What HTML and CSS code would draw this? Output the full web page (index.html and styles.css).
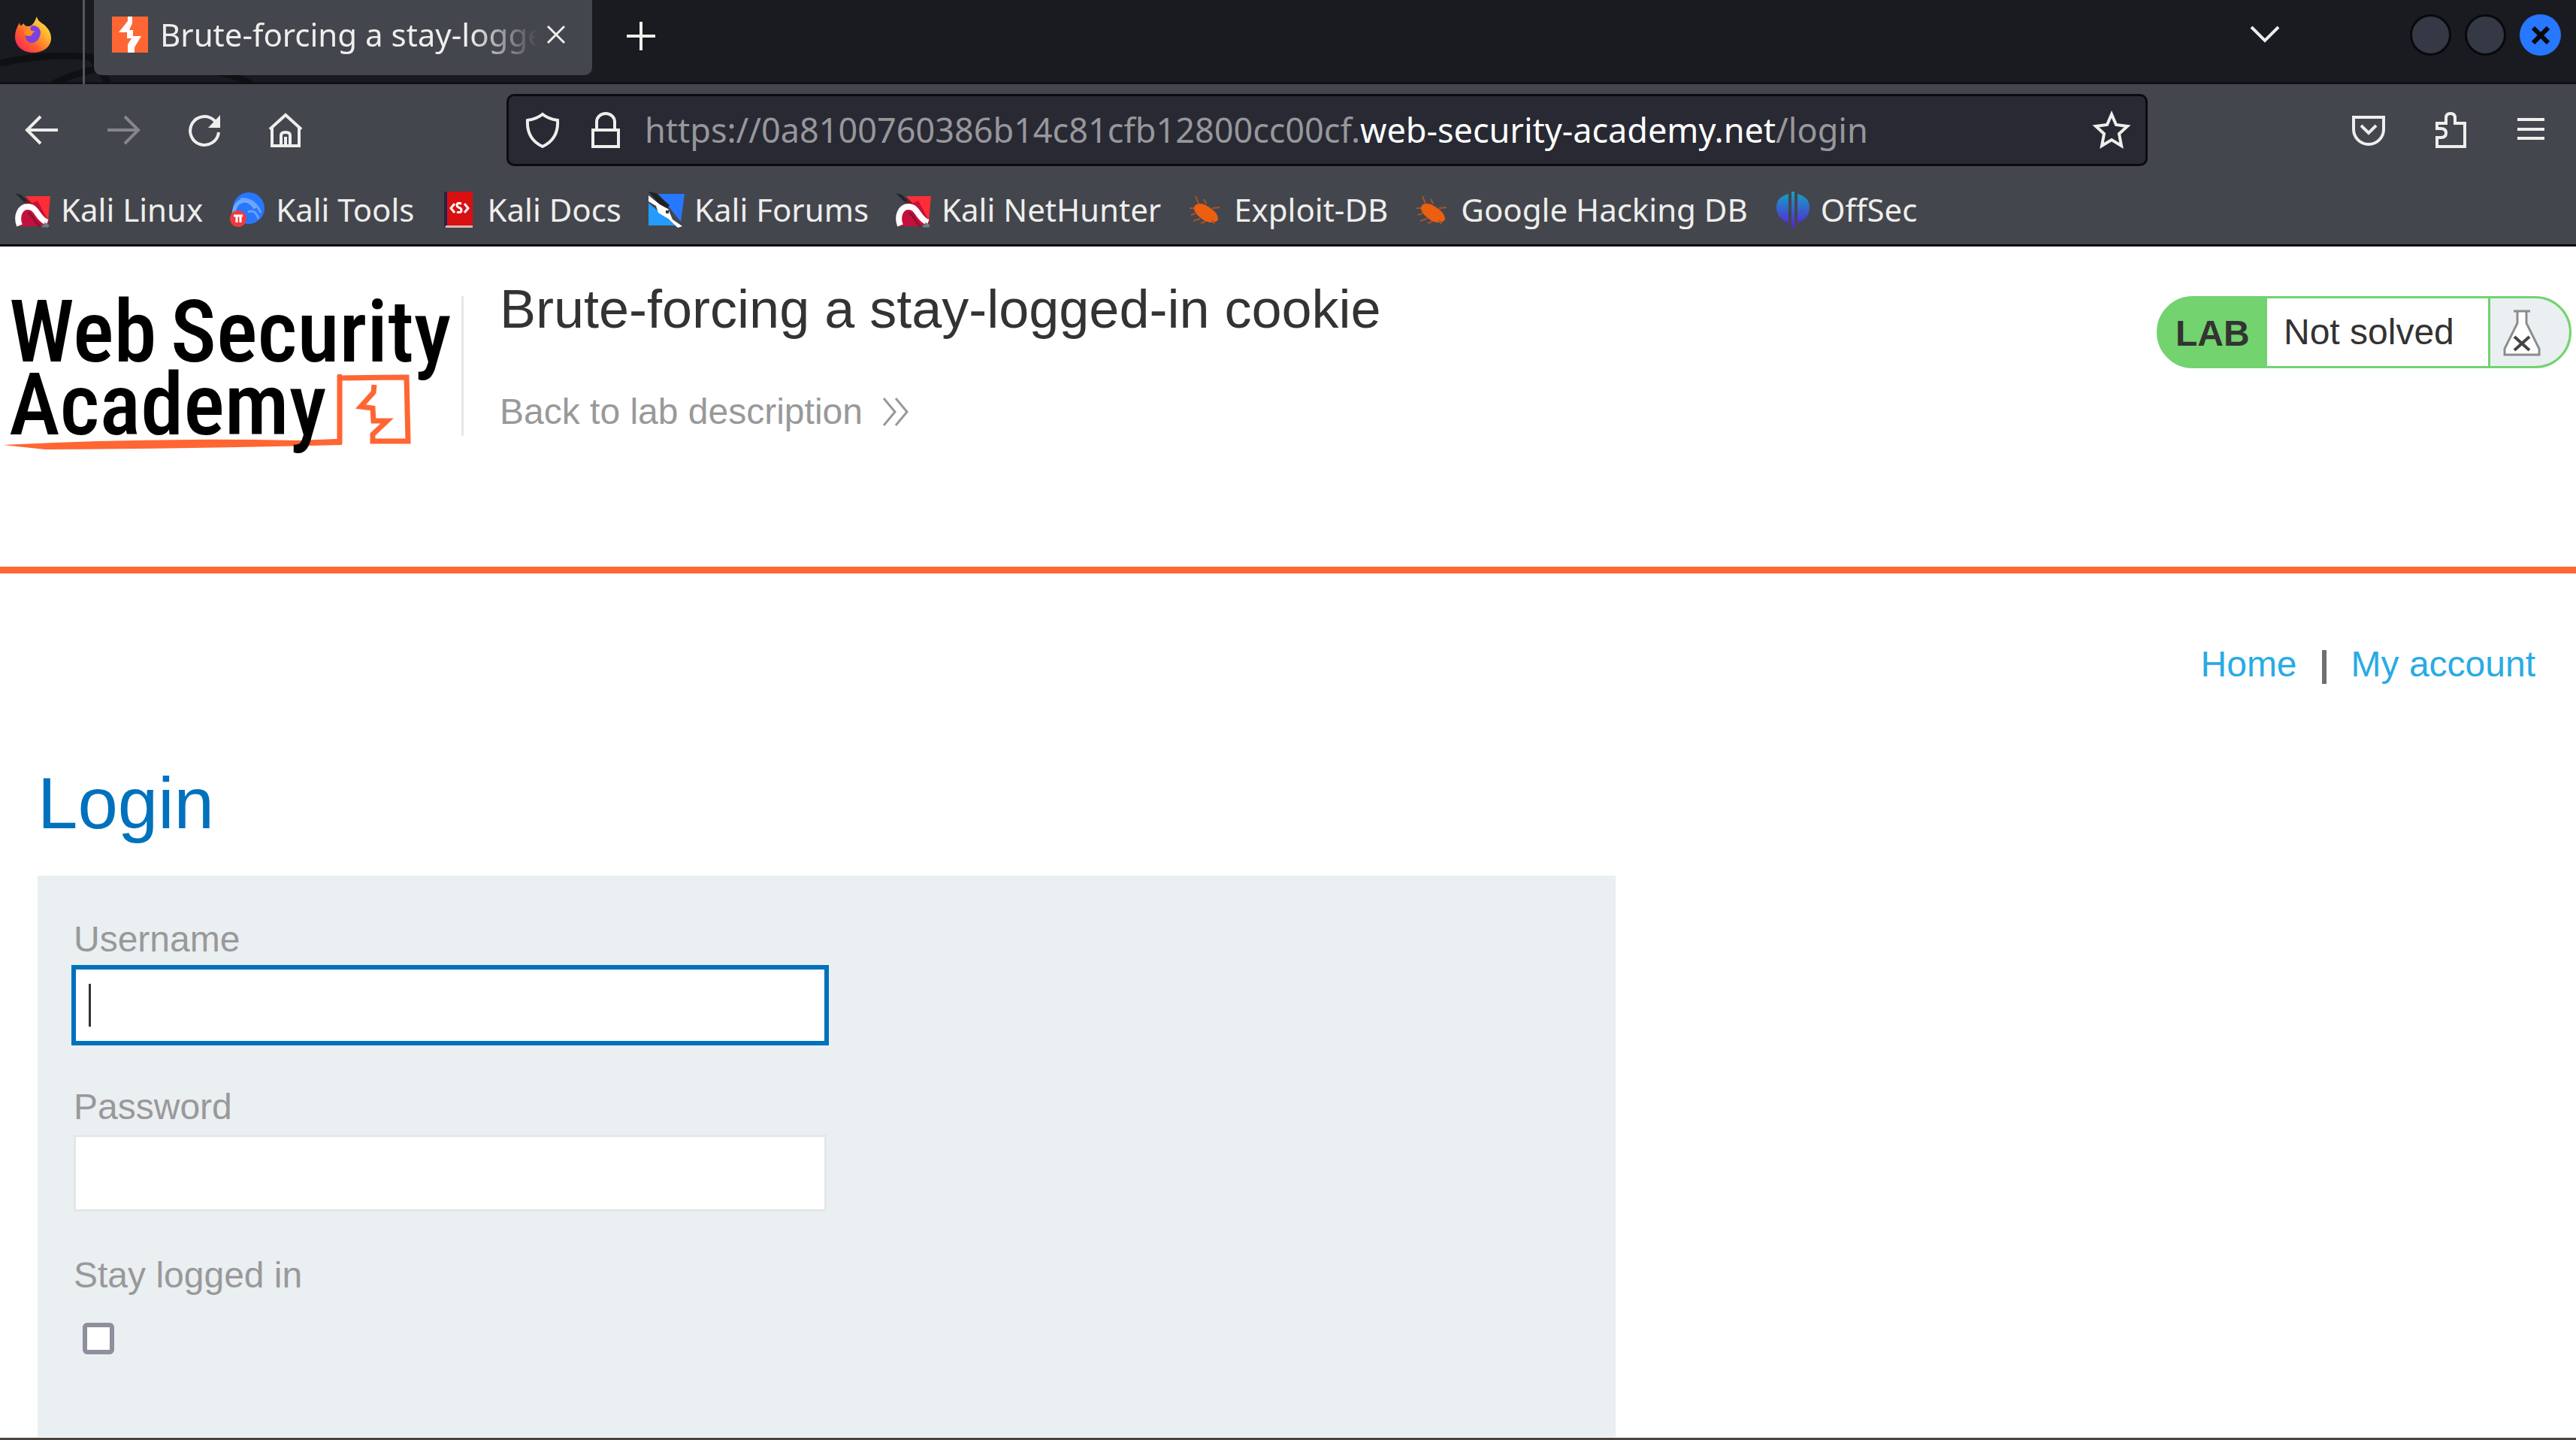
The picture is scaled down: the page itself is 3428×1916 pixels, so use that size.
FILE: index.html
```html
<!DOCTYPE html>
<html lang="en">
<head>
<meta charset="utf-8">
<title>Brute-forcing a stay-logged-in cookie</title>
<link rel="stylesheet" href="styles.css">
</head>
<body>
<svg width="0" height="0" class="defs" aria-hidden="true">
  <defs>
    <symbol id="dragon" viewBox="0 0 48 48">
      <path d="M14 6h33l-3 34z" fill="#fd2d36"/>
      <path d="M8 22 30 12l16 30-16 4H2V34z" fill="#c4103c"/>
      <path d="M0 2l8 2 10 9-3 4z" fill="#26272b"/>
      <path d="M12 13l7-1 7 9-9 1z" fill="#8c1027"/>
      <path d="M6 45C1 32 7 20 17 20c13 0 12 16 26 21" fill="none" stroke="#fff" stroke-width="8"/>
      <path d="M17 28c7 2 8 12 16 18" fill="none" stroke="#8f1131" stroke-width="3"/>
      <path d="M39 42l6 4M36 46l8 0" stroke="#777a80" stroke-width="3"/>
    </symbol>
    <symbol id="bug" viewBox="0 0 48 48">
      <path d="M8 22c0-7 11-8 19-2 8 5 13 10 13 17-3 6-15 5-22-1-5-4-10-9-10-14z" fill="#ec5e10"/>
      <path d="M14 16 10 6m14 10-3-6M8 22H2m30 0 10-1M10 29l-6 2m12 5-9 3m16 1-6 2m15-4 3 5" stroke="#a85425" stroke-width="2" fill="none"/>
    </symbol>
  </defs>
</svg>

<div class="tabstrip">
  <svg class="wallpaper" viewBox="0 0 360 112" aria-hidden="true"><path d="M0 84Q60 70 122 76L145 112M70 112Q140 76 240 92Q300 92 335 112" fill="none" stroke="#0f1013" stroke-width="9"/></svg>
  <svg class="firefox" viewBox="0 0 48 48" aria-hidden="true">
    <defs><linearGradient id="fox" x1="1" y1="0" x2="0" y2="1"><stop offset="0" stop-color="#fff44f"/><stop offset=".35" stop-color="#ffb02e"/><stop offset=".65" stop-color="#ff5a30"/><stop offset="1" stop-color="#f5156c"/></linearGradient></defs>
    <path d="M29 0c1 6 6 8 11 12 5 5 8 10 8 17 0 11-10 19-24 19S0 39 0 27C0 20 2 15 6 8c0 3 1 4 2 4l4-3c0 3 3 4 6 4 5 0 8-6 11-13z" fill="url(#fox)"/>
    <path d="M23 12c9 0 13 7 10 14-2 6-6 9-11 9s-9-5-8-12l9-3c-4-3-3-6 0-8z" fill="#7b3fe4"/>
    <path d="M12 20c6-3 13-1 15 0-5 1-3 6-8 6-4 0-7-2-7-6z" fill="#ff8b16"/>
  </svg>
  <div class="tab">
    <svg class="favicon" viewBox="0 0 48 48" aria-hidden="true"><path fill="#ff6633" d="M0 0h48v48H0z"/><path fill="#fff" d="M21 0h6v9l-4 9h5v8h11l-9 15v7h-9V37l5-8h-6v-8H9l12-15z"/></svg>
    <span class="tab-title">Brute-forcing a stay-logged-in cookie</span>
    <button class="icon-btn tab-close" aria-label="Close tab"><svg viewBox="0 0 24 24"><path d="M1 1l22 22M23 1 1 23"/></svg></button>
  </div>
  <button class="icon-btn new-tab" aria-label="New tab"><svg viewBox="0 0 38 38"><path d="M19 0v38M0 19h38"/></svg></button>
  <button class="icon-btn all-tabs" aria-label="List all tabs"><svg viewBox="0 0 38 24"><path d="M1 2l18 18L37 2"/></svg></button>
  <div class="window-controls">
    <button class="dot" aria-label="Minimize"></button>
    <button class="dot" aria-label="Maximize"></button>
    <button class="dot dot-close" aria-label="Close"><svg viewBox="0 0 24 24"><path d="M2 2l20 20M22 2 2 22"/></svg></button>
  </div>
</div>

<div class="toolbar">
  <div class="nav-buttons">
    <button class="icon-btn" aria-label="Back"><svg viewBox="0 0 48 48"><path d="M45 24H4M22 6 4 24l18 18"/></svg></button>
    <button class="icon-btn dim" aria-label="Forward"><svg viewBox="0 0 48 48"><path d="M3 24h41M26 6l18 18-18 18"/></svg></button>
    <button class="icon-btn" aria-label="Reload"><svg viewBox="0 0 48 48"><path d="M43 27A19 19 0 1 1 37 11l4 4"/><path class="solid" d="M45 4v17H29z"/></svg></button>
    <button class="icon-btn" aria-label="Home"><svg viewBox="0 0 48 48"><path d="M3 23 24 4l21 19M6 21v24h36V21M18 45V31q0-4 6-4t6 4v14M24 33v12"/></svg></button>
  </div>
  <div class="urlbar">
    <svg class="glyph" viewBox="0 0 48 48" aria-hidden="true"><path d="M24 3c6 5 13 7 20 8 1 16-5 28-20 35C9 39 3 27 4 11c7-1 14-3 20-8z"/></svg>
    <svg class="glyph lock" viewBox="0 0 48 48" aria-hidden="true"><path d="M7 24h34v22H7zM12 24V13a12 11 0 0 1 24 0v11"/></svg>
    <div class="url">https://0a8100760386b14c81cfb12800cc00cf.<span class="host">web-security-academy.net</span>/login</div>
    <button class="icon-btn" aria-label="Bookmark this page"><svg viewBox="0 0 48 48"><path d="M24 3l6 14 15 2-11 10 3 16-13-8-13 8 3-16L3 19l15-2z"/></svg></button>
  </div>
  <div class="tool-buttons">
    <button class="icon-btn" aria-label="Save to Pocket"><svg viewBox="0 0 48 48"><path d="M4 7h40v16a20 20 0 0 1-40 0zM14 18l10 10 10-10"/></svg></button>
    <button class="icon-btn" aria-label="Extensions"><svg viewBox="0 0 48 48"><path d="M7 15h12V8q0-6 6-6t6 6v7h13v31H7V34h5q7 0 7-6t-7-6H7z"/></svg></button>
    <button class="icon-btn" aria-label="Menu"><svg viewBox="0 0 48 48"><path d="M6 10h36M6 23h36M6 35h36"/></svg></button>
  </div>
</div>

<nav class="bookmarks" aria-label="Bookmarks">
  <a href="#"><svg viewBox="0 0 48 48"><use href="#dragon"/></svg>Kali Linux</a>
  <a href="#"><svg viewBox="0 0 48 48"><ellipse cx="25" cy="22" rx="21" ry="21" fill="#2777ff"/><path d="M5 30C6 10 24 6 34 22" fill="none" stroke="#71a8ff" stroke-width="5"/><path d="M14 10q18-2 27 18M24 27q10-4 14 9" fill="none" stroke="#6ba3fa" stroke-width="3"/><circle cx="11" cy="36" r="11" fill="#ef3b3e"/><path d="M5 32h12M9 32v9m5-9v9" stroke="#fff" stroke-width="3"/></svg>Kali Tools</a>
  <a href="#"><svg viewBox="0 0 48 48"><path fill="#d90f12" d="M6 0h36v46H6z"/><path fill="#2a2347" d="M4 0h4v46H4z"/><path fill="#d9b4b5" d="M6 45h36v3H6z"/><path d="M18 16l-5 6 5 6m13-12 5 6-5 6M27 16q-6-2-6 2c0 4 7 3 6 7 0 3-4 3-6 2" fill="none" stroke="#fff" stroke-width="3"/></svg>Kali Docs</a>
  <a href="#"><svg viewBox="0 0 48 48"><path fill="#2777ff" d="M13 3h35l-5 37z"/><path fill="#249bff" d="M0 15l36 30H0z"/><path fill="#202126" d="M0 0l10 2 18 16-6 8z"/><path fill="#fff" d="M0 5l15 12 11 6 6 14 13 9-6 2-13-12-13-8-3-9L0 13z"/><path fill="#333" d="M23 25h4v4h-4z"/></svg>Kali Forums</a>
  <a href="#"><svg viewBox="0 0 48 48"><use href="#dragon"/></svg>Kali NetHunter</a>
  <a href="#"><svg viewBox="0 0 48 48"><use href="#bug"/></svg>Exploit-DB</a>
  <a href="#"><svg viewBox="0 0 48 48"><use href="#bug"/></svg>Google Hacking DB</a>
  <a href="#"><svg viewBox="0 0 48 48"><defs><linearGradient id="off" x1="0" y1="0" x2="0" y2="1"><stop offset="0" stop-color="#12a5c4"/><stop offset="1" stop-color="#5a1fd6"/></linearGradient></defs><path fill="url(#off)" d="M18 3v39Q2 35 2 21T18 3zM30 3v39q16-7 16-21T30 3zM22 0h4v48h-4z"/></svg>OffSec</a>
</nav>

<header class="lab-header">
  <svg class="logo" viewBox="0 0 614 216" role="img" aria-label="Web Security Academy">
    <path d="M4 198Q200 188 395 192L449 190V104L455 104V198Q250 203 60 204z" fill="#ff6633"/>
    <path d="M452 196 452 109 541 108 543 193 496 193 496 184 515 166 497 166 496 149 480 147 497 128 498 118" fill="none" stroke="#ff6633" stroke-width="7"/>
    <text x="12" y="87" class="logo-text">Web</text>
    <text x="227" y="87" class="logo-text">Security</text>
    <text x="12" y="184" class="logo-text">Academy</text>
  </svg>
  <div class="divider"></div>
  <div class="lab-title">
    <h2>Brute-forcing a stay-logged-in cookie</h2>
    <a class="back" href="#">Back to lab description<svg viewBox="0 0 36 38" aria-hidden="true"><path d="M2 1l15 18L2 37M18 1l15 18-15 18"/></svg></a>
  </div>
  <div class="status">
    <span class="status-tag">LAB</span>
    <span class="status-text">Not solved</span>
    <span class="status-icon"><svg viewBox="0 0 50 62" aria-hidden="true"><path class="flask" d="M14 2h22M19 2v16L2 52v8h46v-8L31 18V2"/><path class="cross" d="M15 36l20 18M35 36 15 54"/></svg></span>
  </div>
</header>

<main>
  <nav class="links"><a href="#">Home</a><span class="bar"></span><a href="#">My account</a></nav>
  <h1>Login</h1>
  <form class="login">
    <label for="username">Username</label>
    <input class="field active" id="username" type="text">
    <label for="password">Password</label>
    <input class="field" id="password" type="password">
    <label for="stay">Stay logged in</label>
    <input class="check" id="stay" type="checkbox">
  </form>
</main>
<div class="window-edge"></div>
</body>
</html>
```
FILE: styles.css
```css
* { box-sizing: border-box; }
body { margin: 0; background: #fff; font: 48px/56px "Liberation Sans", Arial, sans-serif; color: #333332; }
button { padding: 0; border: 0; background: none; }
a { text-decoration: none; }
svg { display: block; flex: none; }
.defs { position: absolute; }

/* browser chrome */
.tabstrip, .toolbar, .bookmarks { display: flex; font: 42px/56px "Noto Sans", sans-serif; color: #eeeeec; }
.icon-btn { flex: none; width: 48px; height: 48px; color: #eeeeec; }
.icon-btn svg { width: 100%; height: 100%; fill: none; stroke: currentColor; stroke-width: 4; overflow: visible; }
.icon-btn .solid { fill: currentColor; stroke: none; }
.dim { color: #85868a; }

.tabstrip { position: relative; height: 112px; padding: 0 20px; background: #1a1b20; border-bottom: 3px solid #101115; align-items: flex-start; }
.wallpaper { position: absolute; left: 0; top: 0; width: 360px; height: 112px; }
.firefox { position: relative; width: 48px; height: 48px; margin-top: 22px; }
.tab { position: relative; display: flex; align-items: center; width: 663px; height: 100px; margin-left: 57px; padding: 0 36px 8px 24px; background: #44464d; border-radius: 0 0 10px 10px; }
.tab::before { content: ""; position: absolute; left: -15px; top: 0; width: 3px; height: 112px; background: #55565a; }
.favicon { width: 48px; height: 48px; }
.tab-title { flex: 1; min-width: 0; margin-left: 16px; overflow: hidden; white-space: nowrap; mask-image: linear-gradient(to left, transparent, #000 90px); }
.tab-close { width: 24px; height: 24px; margin-left: 12px; }
.tab-close svg { stroke-width: 3; }
.new-tab { width: 38px; height: 38px; margin: 29px 0 0 46px; }
.all-tabs { width: 38px; height: 24px; margin: 34px 174px 0 auto; }
.window-controls { display: flex; gap: 18px; margin-top: 19px; }
.dot { width: 55px; height: 55px; border-radius: 50%; border: 3px solid #08090b; background: #343945; }
.dot-close { display: grid; place-items: center; border: 0; background: #2777ff; }
.dot-close svg { width: 24px; height: 24px; stroke: #08090b; stroke-width: 6; }

.toolbar { height: 121px; padding: 0 36px 0 32px; background: #44464d; align-items: center; }
.nav-buttons { display: flex; gap: 60px; }
.urlbar { flex: 1; min-width: 0; display: flex; align-items: center; height: 96px; margin: 0 270px; padding: 0 21px; background: #282933; border: 3px solid #0c0c0f; border-radius: 10px; }
.glyph { width: 48px; height: 48px; fill: none; stroke: #eeeeec; stroke-width: 4; }
.lock { margin-left: 36px; }
.url { flex: 1; min-width: 0; margin-left: 28px; white-space: nowrap; font-size: 45px; color: #97979b; }
.host { color: #fff; }
.tool-buttons { display: flex; gap: 60px; }

.bookmarks { height: 95px; padding: 0 20px; gap: 36px; align-items: center; background: #44464d; border-bottom: 3px solid #0c0c10; }
.bookmarks a { display: flex; align-items: center; gap: 13px; color: #eeeeec; white-space: nowrap; }
.bookmarks svg { width: 48px; height: 48px; }

/* lab banner */
.lab-header { display: flex; align-items: flex-start; min-height: 435px; padding-right: 6px; border-bottom: 9px solid #ff6633; }
.logo { width: 614px; height: 216px; margin-top: 66px; overflow: visible; }
.logo-text { font: 500 115px "Roboto Condensed", Lato, sans-serif; fill: #000; }
.divider { width: 3px; height: 186px; margin-top: 66px; background: #e6e6e6; }
.lab-title { margin: 41px 0 0 48px; }
h2 { margin: 0 0 67px; font-size: 72px; line-height: 84px; font-weight: 400; }
.back { display: flex; align-items: center; color: #999; }
.back svg { width: 36px; height: 38px; margin-left: 26px; fill: none; stroke: #999; stroke-width: 3; }
.status { display: flex; height: 96px; margin: 66px 0 0 auto; border: 3px solid #72d36f; border-radius: 48px; overflow: hidden; background: #72d36f; align-items: stretch; line-height: 90px; }
.status-tag { width: 144px; padding: 2px 0 0 22px; font-weight: 700; }
.status-text { width: 294px; padding-left: 22px; background: #fff; }
.status-icon { width: 105px; margin-left: 3px; padding: 15px 0 0 17px; background: #eaeff2; }
.status-icon svg { width: 50px; height: 62px; }
.flask { fill: #fff; stroke: #8c8c8c; stroke-width: 3; }
.cross { stroke: #444; stroke-width: 4; }

/* page body */
main { padding: 93px 50px 0; }
.links { display: flex; justify-content: flex-end; gap: 33px; padding-right: 4px; }
.links a { color: #29abe5; }
.bar { width: 6px; height: 45px; margin-top: 9px; background: #6f6f6e; }
h1 { margin: 102px 0 41px; font-size: 96px; line-height: 110px; font-weight: 400; color: #0071bc; }
.login { max-width: 2100px; padding: 57px 48px 110px; background: #eaeff2; color: #999; }
.login label { display: block; }
.field { display: block; width: 1002px; max-width: 100%; height: 102px; margin: 9px 0 57px; padding: 0 20px; border: 3px solid #e6e6e6; background: #fff; font: inherit; color: #333332; }
.active { height: 101px; border-color: #0071bc; outline: 3px solid #0071bc; background: #fff linear-gradient(#333332, #333332) 17px center / 3px 57px no-repeat; }
.check { display: block; appearance: none; width: 42px; height: 42px; margin: 35px 0 0 12px; border: 6px solid #8f8f9d; border-radius: 6px; background: #fff; }
.window-edge { height: 3px; margin-top: 1px; background: #4a443e; }
```
